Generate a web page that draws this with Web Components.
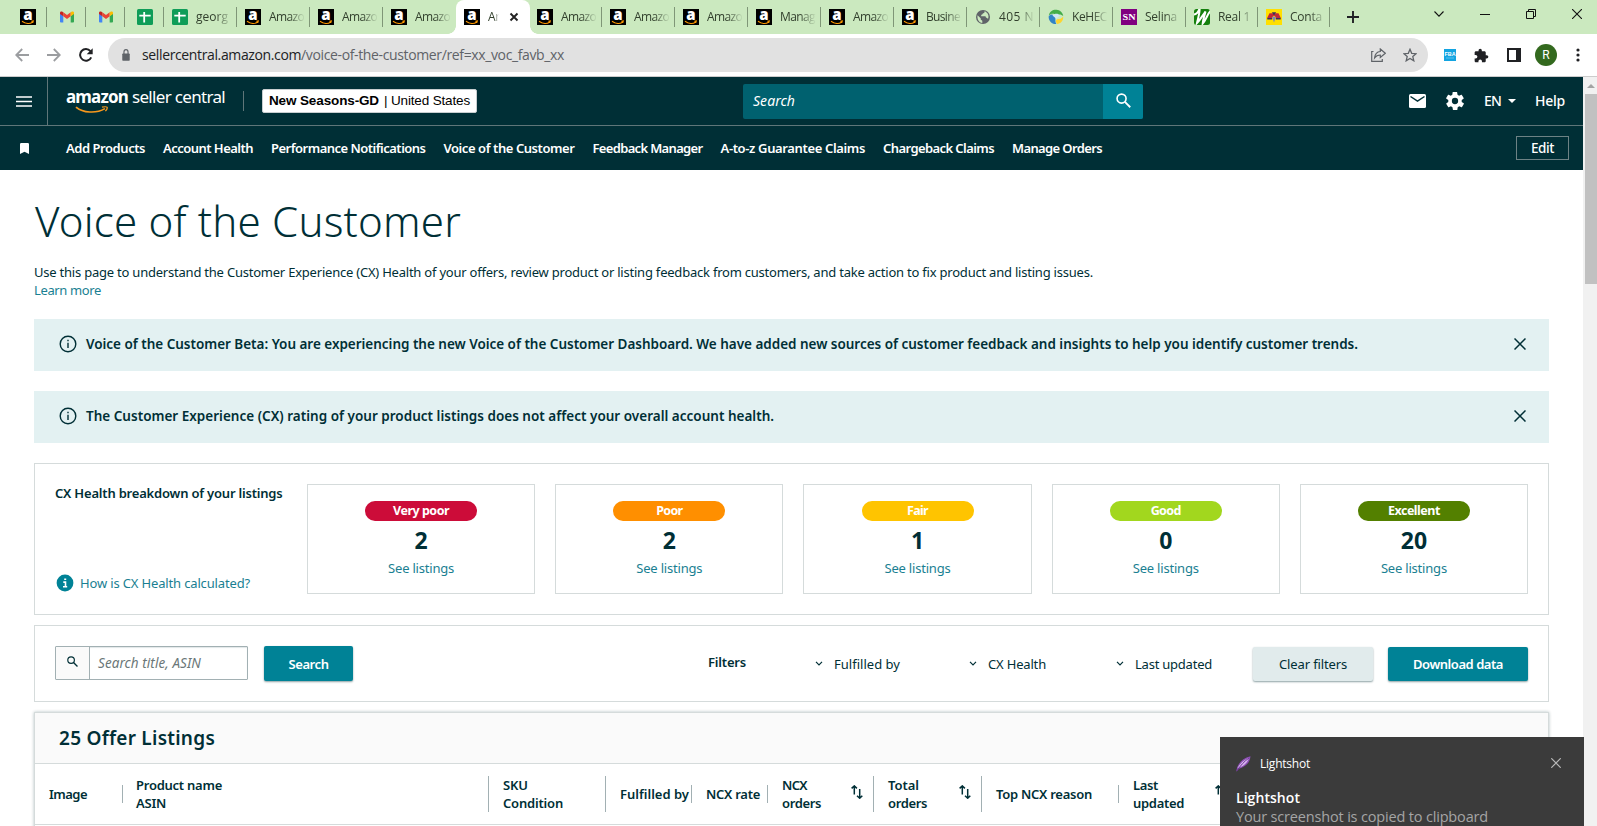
<!DOCTYPE html>
<html lang="en">
<head>
<meta charset="utf-8">
<title>Voice of the Customer</title>
<style>
  html, body {
    margin: 0;
    height: 826px;
    overflow: hidden;
    background: #fff;
  }
  body {
    font-family: "Noto Sans", "Open Sans", sans-serif;
    font-size: 13px;
    line-height: 18px;
    color: #002f36;
  }
</style>
</head>
<body>
<voc-app></voc-app>

<script>
const ICONS = {
  amazon: ['0 0 16 16', `<rect width="16" height="16" fill="#000"/>
    <text x="7.900" y="10.800" text-anchor="middle" font-family="Open Sans, sans-serif" font-weight="800" font-size="15" fill="#fff">a</text>
    <path d="M2 12.300c3.600 2.600 8 2.600 10.500.9M11.300 12.300l2-.3-.6 1.800" fill="none" stroke="#f90" stroke-width="1.100"/>`],
  gmail: ['0 0 16 16', `<path d="M1 4.200v8.300c0 .600.300.900.900.900h2.400V6.900z" fill="#4285f4"/>
    <path d="M15 4.200v8.300c0 .600-.300.900-.900.900h-2.400V6.900z" fill="#34a853"/>
    <path d="M4.300 3.300L8 6.100l3.700-2.800v4L8 10.100 4.300 7.300z" fill="#ea4335"/>
    <path d="M1 4c0-1.500 1.600-1.800 2.500-1.200l.8.600v3.900L1 4.900z" fill="#c5221f"/>
    <path d="M15 4c0-1.500-1.600-1.800-2.500-1.200l-.8.600v3.900L15 4.900z" fill="#fbbc04"/>`],
  sheet: ['0 0 16 16', `<rect width="16" height="16" rx="1.500" fill="#0f9d58"/><path d="M2.300 6.600h11.400M7.200 3v10.500" stroke="#fff" stroke-width="1.800"/>`],
  globe: ['0 0 16 16', `<circle cx="8" cy="8" r="7" fill="#5f6368"/><path d="M2.500 6.200l3.200 3v1.300l1.600 1.200v2.200C4 13.400 2 10.400 2.500 6.200zM9.500 2.200c.2 1.400-.4 2-1.600 2.100-.3 1.300-1 1.500-1.700 1.500v1.400h4.300c.3 1 .5 1.600 1.600 1.700.6.200.7.700.7 1.400 1.700-2.800.4-6.900-3.300-8.100z" fill="#cbe9bf"/>`],
  kehe: ['0 0 16 16', `<path d="M.8 6.500C1.500 2.500 5 .5 8.500.8c3.500.2 6.500 3 6.700 6.300-1.800-1.700-4.400-2.100-6.400-.600C6 4 3 4.500.8 6.500z" fill="#43ad49"/>
    <path d="M.7 7.200c2-2.400 4.900-2 6.300.600 1 2.600-.4 5 1.400 7.200C4 15.500.2 11.700.7 7.200z" fill="#3184c6"/>
    <path d="M15.200 7.500c.3 4.300-2.700 7.300-6 7.500-2-2.400-1.300-4.200 0-4.800 2.300-.1 4.800-.5 6-2.700z" fill="#fdd430"/>
    <path d="M4.500 6.500c2-2.300 5.800-2.300 7.400-.2L8.300 9.800z" fill="#cde6f2"/>`],
  sn: ['0 0 16 16', `<rect width="16" height="16" fill="#800080"/><text x="8" y="11.300" text-anchor="middle" textLength="13" lengthAdjust="spacingAndGlyphs" font-family="Liberation Serif, serif" font-weight="bold" font-size="9" fill="#fff">SN</text>`],
  real: ['0 0 16 16', `<rect width="16" height="16" rx="2.500" fill="#15800d"/><path d="M-.5 5.500C2.500 5.500 4.500 2.500 5.600-.5 6 4 4 9 3 14 6.500 10.500 8.800 6 11.500 2.500 10.500 7 9 10 8.700 14.500 12 11 13.500 5 16.500 2" fill="none" stroke="#fff" stroke-width="2"/>`],
  contact: ['0 0 16 16', `<rect width="16" height="16" fill="#ffdf00"/><path d="M3.500 4.200h9L15 9.300h-4.500L8 6.500 5.500 9.300H1z" fill="#c0283a"/><path d="M5.800 3.300h4.400L8 6.300z" fill="#34315d"/><path d="M1.300 9h4.900v1.500H1.300zm8.500 0h4.900v1.500H9.800z" fill="#34315d"/><path d="M6 7.800h4L8 13.500z" fill="#7b86b8"/>`],
  tabclose: ['0 0 10 10', `<path d="M1.500 1.500l7 7m0-7l-7 7" stroke="#222" stroke-width="1.900"/>`],
  plus: ['0 0 12 12', `<path d="M6 0v12M0 6h12" stroke="#202124" stroke-width="1.900"/>`],
  wchev: ['0 0 10 6', `<path d="M.5.500L5 5.200 9.500.500" fill="none" stroke="#111" stroke-width="1.100"/>`],
  wmin: ['0 0 10 10', `<path d="M0 4.500h10" stroke="#111"/>`],
  wmax: ['0 0 10 10', `<path d="M.5 2.500h7v7h-7zM2.500 2.500v-2h7v7h-2" fill="none" stroke="#111"/>`],
  wclose: ['0 0 10 10', `<path d="M0 0l10 10M10 0L0 10" stroke="#111" stroke-width="1.100"/>`],
  back: ['0 0 14 14', `<path d="M14 7H1.500M7.200 1L1.200 7l6 6" fill="none" stroke="#9b9da0" stroke-width="1.800"/>`],
  forward: ['0 0 14 14', `<path d="M0 7h12.500M6.800 1l6 6-6 6" fill="none" stroke="#9b9da0" stroke-width="1.800"/>`],
  reload: ['0 0 14 14', `<path d="M12.200 9.300A5.800 5.800 0 1 1 11.400 3.200" fill="none" stroke="#202124" stroke-width="2"/><path d="M13.700.300v6H7.700z" fill="#202124"/>`],
  lock: ['0 0 9 12', `<rect x=".300" y="4.500" width="8.400" height="7.300" rx=".8" fill="#5f6368"/><path d="M2.200 5V3a2.300 2.300 0 0 1 4.600 0v2" fill="none" stroke="#5f6368" stroke-width="1.300"/>`],
  share: ['0 0 15 14', `<path d="M2.500 3.500H.7v9.800h10.600v-2.300M9.300 1l5 4.300-5 4.200V7C6.500 7 5 7.800 3.600 9.800 4 6 6 3.800 9.300 3.500z" fill="none" stroke="#5f6368" stroke-width="1.200"/>`],
  star: ['0 0 14 14', `<path d="M7 1.300l1.700 4 4.400.4-3.300 2.900 1 4.200L7 10.500l-3.800 2.300 1-4.200L.9 5.700l4.400-.4z" fill="none" stroke="#5f6368" stroke-width="1.300"/>`],
  fba: ['0 0 12 12', `<rect width="12" height="12" fill="#13a4e1"/><text x="6" y="7.200" text-anchor="middle" textLength="11" lengthAdjust="spacingAndGlyphs" font-family="Liberation Sans, sans-serif" font-weight="bold" font-size="6" fill="#fff">FBA</text><path d="M2 9h8" stroke="#6fc8ee" stroke-width=".800"/>`],
  puzzle: ['1 0 23 23', `<path fill="#202124" d="M20.500 11H19V7c0-1.100-.9-2-2-2h-4V3.500a2.500 2.500 0 0 0-5 0V5H4c-1.100 0-2 .9-2 2v3.800h1.500a2.700 2.700 0 0 1 0 5.400H2V20c0 1.100.9 2 2 2h3.800v-1.500a2.700 2.700 0 0 1 5.400 0V22H17c1.100 0 2-.9 2-2v-4h1.500a2.500 2.500 0 0 0 0-5z"/>`],
  panel: ['0 0 14 14', `<path d="M1 1h12v12H1z" fill="none" stroke="#202124" stroke-width="2"/><path d="M9 0h5v14H9z" fill="#202124"/>`],
  dots: ['0 0 4 14', `<g fill="#202124"><circle cx="2" cy="2" r="1.600"/><circle cx="2" cy="7" r="1.600"/><circle cx="2" cy="12" r="1.600"/></g>`],
  menu: ['0 0 16 11', `<path d="M0 1h16M0 5.500h16M0 10h16" stroke="#fff" stroke-width="1.700"/>`],
  smile: ['0 0 34 9', `<path d="M1 1.200C8 7.800 21 8.800 30 3" fill="none" stroke="#f7981d" stroke-width="1.800"/><path d="M27 1.300c2-.5 4.200-.8 5 0 .6 1-.4 3-1.600 4.500" fill="none" stroke="#f7981d" stroke-width="1.300"/>`],
  search: ['0 0 14 14', `<circle cx="5.200" cy="5.200" r="4.200" fill="none" stroke="currentColor" stroke-width="1.500"/><path d="M8.300 8.300l5 5" stroke="currentColor" stroke-width="1.700"/>`],
  mail: ['0 0 17 14', `<rect width="17" height="14" rx="1.500" fill="#fff"/><path d="M1.500 2.500l7 4.700 7-4.700" fill="none" stroke="#002f36" stroke-width="1.500"/>`],
  gear: ['2 2 20 20', `<path fill="#fff" d="M19.400 13c0-.3.100-.6.100-1s0-.700-.1-1l2.100-1.600c.2-.2.200-.4.100-.6l-2-3.500c-.1-.2-.4-.3-.6-.2l-2.500 1c-.5-.4-1.100-.7-1.700-1l-.4-2.600c0-.3-.2-.5-.5-.5h-4c-.2 0-.4.200-.5.400l-.4 2.700c-.6.200-1.100.6-1.700 1l-2.500-1c-.2-.1-.4 0-.6.200l-2 3.500c-.1.200 0 .4.200.6L4.600 11c0 .3-.1.700-.1 1s0 .7.1 1l-2.100 1.600c-.2.200-.2.400-.1.600l2 3.500c.1.200.3.300.6.200l2.500-1c.5.400 1.100.7 1.700 1l.4 2.600c0 .3.200.5.500.5h4c.2 0 .5-.2.500-.4l.4-2.700c.6-.2 1.200-.6 1.700-1l2.500 1c.2.100.5 0 .6-.2l2-3.500c.1-.2.1-.5-.1-.6zM12 15.500a3.500 3.500 0 1 1 0-7 3.500 3.500 0 0 1 0 7z"/>`],
  caret: ['0 0 8 4', `<path d="M0 0h8L4 4z" fill="#fff"/>`],
  bookmark: ['0 0 9 11', `<path d="M0 1.200Q0 0 1.200 0h6.600Q9 0 9 1.200V11L4.500 8.800 0 11z" fill="#fff"/>`],
  info: ['0 0 18 18', `<circle cx="9" cy="9" r="7.800" fill="none" stroke="#002f36" stroke-width="1.400"/><path d="M9 7.800v5.200M9 4.800v1.500" stroke="#002f36" stroke-width="1.400"/>`],
  infofill: ['0 0 18 18', `<circle cx="9" cy="9" r="8.400" fill="#008296"/><path d="M7.300 8.100h2.200v4.500M7 12.800h4.200M8.200 5.200h2" fill="none" stroke="#fff" stroke-width="1.600"/>`],
  close: ['0 0 12 12', `<path d="M.5.500l11 11M11.500.500l-11 11" stroke="#002f36" stroke-width="1.500"/>`],
  chev: ['0 0 8 5', `<path d="M1 .8L4 3.800 7 .8" fill="none" stroke="#002f36" stroke-width="1.200"/>`],
  sort: ['0 0 12 14', `<path d="M3.300 9.500V1M.6 3.400L3.300.900l2.600 2.500M8.700 4v9M6 10.700l2.700 2.500 2.600-2.500" fill="none" stroke="#002f36" stroke-width="1.500"/>`],
  feather: ['0 0 15 16', `<path d="M.3 15.700C1 9 5 2.500 14.500.300 14 5.500 11.500 10 2.500 13z" fill="#8d4fb5"/><path d="M1.500 12C4 7.500 8 4 13 1.800 11.500 6.500 8 9.800 3.500 11.500" fill="#d9b8ee"/><path d="M1 14.800C4.500 9.500 8 5.500 13 2" stroke="#6d3596" stroke-width="1" fill="none"/>`],
  toastclose: ['0 0 10 10', `<path d="M.3.300l9.400 9.400M9.700.300L.3 9.700" stroke="#b9b9b9" stroke-width="1.200"/>`]
};

class UiIcon extends HTMLElement {
  connectedCallback() {
    const [box, body] = ICONS[this.getAttribute('name')];
    const w = this.getAttribute('w') || 16;
    const h = this.getAttribute('h') || w;
    this.attachShadow({ mode: 'open' }).innerHTML = `
      <style>
        :host { display: block; flex: none; width: ${w}px; height: ${h}px; }
        svg { display: block; }
      </style>
      <svg width="${w}" height="${h}" viewBox="${box}" preserveAspectRatio="none">${body}</svg>`;
  }
}
customElements.define('ui-icon', UiIcon);

// One line of text tracked out (or in) to the measure given in "w".
class UiText extends HTMLElement {
  connectedCallback() {
    this.attachShadow({ mode: 'open' }).innerHTML = `
      <style>
        :host { display: block; flex: none; white-space: nowrap; }
        span { display: inline-block; }
      </style>
      <span><slot></slot></span>`;
    const w = parseFloat(this.getAttribute('w'));
    if (!w) return;
    const span = this.shadowRoot.querySelector('span');
    const gap = (w - span.getBoundingClientRect().width) / this.textContent.length;
    span.style.letterSpacing = gap.toFixed(3) + 'px';
    this.style.width = w + 'px';
  }
}
customElements.define('ui-text', UiText);

class BrowserTab extends HTMLElement {
  connectedCallback() {
    const label = this.getAttribute('label');
    const active = this.hasAttribute('active');
    this.attachShadow({ mode: 'open' }).innerHTML = `
      <style>
        :host {
          display: flex; flex: none; box-sizing: border-box; position: relative;
          width: ${this.getAttribute('w') || 73}px; height: 34px; padding: 9px 0 0 8px;
          color: #32402d; font: 12px/16px "Open Sans", sans-serif;
        }
        :host(.bare) { padding-left: 12px; }
        :host::after { content: ''; position: absolute; right: 0; top: 7px; width: 1px; height: 20px; background: #7f9677; }
        :host([nosep])::after { display: none; }
        :host([active]) { background: #fff; border-radius: 8px 8px 0 0; width: 74px; margin-right: -1px; z-index: 1; }
        :host([active])::after, :host([active])::before {
          content: ''; position: absolute; display: block; width: 8px; height: 8px; top: 26px; bottom: auto;
          background: radial-gradient(circle at 0 0, transparent 7.500px, #fff 8px);
        }
        :host([active])::before { left: -8px; }
        :host([active])::after { right: -8px; background: radial-gradient(circle at 100% 0, transparent 7.500px, #fff 8px); }
        .label {
          width: ${active ? 11 : 36}px; margin-left: 8px; height: 18px; white-space: nowrap;
          -webkit-mask-image: linear-gradient(90deg, #000 55%, transparent);
          mask-image: linear-gradient(90deg, #000 55%, transparent);
        }
        .x { margin: 3px 0 0 10px; }
      </style>
      <ui-icon name="${this.getAttribute('icon')}" w="16"></ui-icon>
      ${label ? `<div class="label"><ui-text w="${this.getAttribute('tw') || 35}">${label}</ui-text></div>` : ''}
      ${active ? '<ui-icon class="x" name="tabclose" w="10"></ui-icon>' : ''}`;
  }
}
customElements.define('browser-tab', BrowserTab);

class BrowserBar extends HTMLElement {
  connectedCallback() {
    this.attachShadow({ mode: 'open' }).innerHTML = `
      <style>
        :host { display: block; height: 77px; }
        .strip { display: flex; height: 34px; background: #cbe9bf; padding-left: 8px; }
        .plus { margin: 11px 0 0 17px; }
        .win { display: flex; align-items: flex-start; margin-left: auto; padding: 9px 15px 0 0; gap: 36px; }
        .tools {
          display: flex; align-items: center; box-sizing: border-box;
          padding-left: 15px; border-bottom: 1px solid #ccc; height: 43px;
        }
        .omni {
          display: flex; align-items: center; box-sizing: border-box; margin-left: 15px;
          width: 1320px; height: 34px; border-radius: 17px; background: #e1e1e1;
          padding: 0 11px 0 14px; font: 14px/20px "Open Sans", sans-serif; color: #202124;
        }
        .omni i { font-style: normal; color: #5f6368; }
        .avatar {
          width: 22px; height: 22px; border-radius: 50%; background: #33691e; color: #fff; margin-left: 14px;
          font: 12px/22px Roboto, sans-serif; text-align: center;
        }
      </style>
      <div class="strip">
        <browser-tab class="bare" w="39" icon="amazon"></browser-tab>
        <browser-tab class="bare" w="39" icon="gmail"></browser-tab>
        <browser-tab class="bare" w="39" icon="gmail"></browser-tab>
        <browser-tab class="bare" w="39" icon="sheet"></browser-tab>
        <browser-tab icon="sheet" label="georg" tw="32"></browser-tab>
        <browser-tab icon="amazon" label="Amazo"></browser-tab>
        <browser-tab icon="amazon" label="Amazo"></browser-tab>
        <browser-tab icon="amazon" label="Amazo" nosep></browser-tab>
        <browser-tab icon="amazon" label="Ar" tw="12" active></browser-tab>
        <browser-tab icon="amazon" label="Amazo"></browser-tab>
        <browser-tab icon="amazon" label="Amazo"></browser-tab>
        <browser-tab icon="amazon" label="Amazo"></browser-tab>
        <browser-tab icon="amazon" label="Manag"></browser-tab>
        <browser-tab icon="amazon" label="Amazo"></browser-tab>
        <browser-tab icon="amazon" label="Busine" tw="34"></browser-tab>
        <browser-tab icon="globe" label="405 N"></browser-tab>
        <browser-tab icon="kehe" label="KeHEC"></browser-tab>
        <browser-tab icon="sn" label="Selina" tw="32"></browser-tab>
        <browser-tab w="72" icon="real" label="Real 1" tw="32"></browser-tab>
        <browser-tab w="72" icon="contact" label="Conta" tw="32"></browser-tab>
        <ui-icon class="plus" name="plus" w="12"></ui-icon>
        <div class="win">
          <ui-icon name="wchev" w="10" h="6" style="margin-top:2px"></ui-icon>
          <ui-icon name="wmin" w="10" style="margin-top:1px"></ui-icon>
          <ui-icon name="wmax" w="10"></ui-icon>
          <ui-icon name="wclose" w="10"></ui-icon>
        </div>
      </div>
      <div class="tools">
        <ui-icon name="back" w="14"></ui-icon>
        <ui-icon name="forward" w="14" style="margin-left:18px"></ui-icon>
        <ui-icon name="reload" w="14" style="margin-left:18px"></ui-icon>
        <div class="omni">
          <ui-icon name="lock" w="8" h="12"></ui-icon>
          <ui-text w="422" style="margin:0 auto 0 12px">sellercentral.amazon.com<i>/voice-of-the-customer/ref=xx_voc_favb_xx</i></ui-text>
          <ui-icon name="share" w="15" h="14"></ui-icon>
          <ui-icon name="star" w="14" style="margin-left:17px"></ui-icon>
        </div>
        <ui-icon name="fba" w="12" style="margin-left:16px"></ui-icon>
        <ui-icon name="puzzle" w="15" style="margin-left:18px"></ui-icon>
        <ui-icon name="panel" w="14" style="margin-left:18px"></ui-icon>
        <div class="avatar">R</div>
        <ui-icon name="dots" w="4" h="14" style="margin-left:19px"></ui-icon>
      </div>`;
  }
}
customElements.define('browser-bar', BrowserBar);

class SellerHeader extends HTMLElement {
  connectedCallback() {
    this.attachShadow({ mode: 'open' }).innerHTML = `
      <style>
        :host { display: block; height: 93px; background: #002f36; color: #fff; font-weight: 600; }
        .top { display: flex; align-items: center; height: 48px; border-bottom: 1px solid #5f7679; }
        .menu { width: 31px; padding-left: 16px; height: 48px; display: flex; align-items: center; border-right: 1px solid #5f7679; }
        .logo { margin-left: 18px; width: 159px; height: 36px; font-size: 17px; font-weight: 400; line-height: 22px; }
        .logo div { display: flex; gap: 4px; margin-top: 3px; }
        .logo b { font-weight: 700; }
        .logo ui-icon { margin: -2px 0 0 9px; }
        .sep { width: 1px; height: 20px; background: #5f7679; margin-left: 18px; }
        .account {
          display: flex; align-items: center; box-sizing: border-box; width: 215px; height: 24px; margin-left: 18px;
          padding-left: 6px; border: 1px solid #c8ced0; border-radius: 2px; background: #fff; color: #000;
          font: 13.500px/20px "Liberation Sans", sans-serif;
        }
        .find { display: flex; width: 400px; height: 35px; margin-left: 266px; background: #00616f; border-radius: 2px; overflow: hidden; }
        .find ui-text { font: italic 14px/34px "Noto Sans"; margin-left: 10px; }
        .find div { width: 40px; margin-left: auto; background: #008296; display: flex; align-items: center; justify-content: center; }
        .find div ui-icon { margin: -2px 0 0 0; }
        .right { display: flex; align-items: center; margin-left: auto; padding-right: 18px; font-size: 14px; font-weight: 500; }
        .nav { display: flex; align-items: center; height: 44px; gap: 18px; }
        .nav ui-icon { margin: 0 19px 0 20px; }
        .edit {
          display: flex; justify-content: center; margin-left: auto; margin-right: 14px; box-sizing: border-box;
          width: 53px; height: 24px; border: 1px solid #6d8285; line-height: 22px; font-size: 13.500px; font-weight: 500;
        }
      </style>
      <div class="top">
        <div class="menu"><ui-icon name="menu" w="16" h="11"></ui-icon></div>
        <div class="logo">
          <div><ui-text w="62"><b>amazon</b></ui-text><ui-text w="93">seller central</ui-text></div>
          <ui-icon name="smile" w="34" h="8"></ui-icon>
        </div>
        <div class="sep"></div>
        <div class="account"><ui-text w="110"><b>New Seasons-GD</b></ui-text><ui-text w="86" style="margin-left:5px">| United States</ui-text></div>
        <div class="find"><ui-text w="42">Search</ui-text><div><ui-icon name="search" w="15"></ui-icon></div></div>
        <div class="right">
          <ui-icon name="mail" w="17" h="14"></ui-icon>
          <ui-icon name="gear" w="18" style="margin-left:20px"></ui-icon>
          <ui-text w="17" style="margin-left:20px">EN</ui-text>
          <ui-icon name="caret" w="8" h="4" style="margin-left:7px"></ui-icon>
          <ui-text w="30" style="margin-left:19px">Help</ui-text>
        </div>
      </div>
      <div class="nav">
        <ui-icon name="bookmark" w="9" h="11"></ui-icon>
        <ui-text w="79">Add Products</ui-text>
        <ui-text w="90">Account Health</ui-text>
        <ui-text w="154.500">Performance Notifications</ui-text>
        <ui-text w="131">Voice of the Customer</ui-text>
        <ui-text w="110">Feedback Manager</ui-text>
        <ui-text w="144.500">A-to-z Guarantee Claims</ui-text>
        <ui-text w="111">Chargeback Claims</ui-text>
        <ui-text w="90">Manage Orders</ui-text>
        <div class="edit"><ui-text w="23">Edit</ui-text></div>
      </div>`;
  }
}
customElements.define('seller-header', SellerHeader);

class VocAlert extends HTMLElement {
  connectedCallback() {
    this.attachShadow({ mode: 'open' }).innerHTML = `
      <style>
        :host {
          display: flex; align-items: center; box-sizing: border-box; height: 52px; margin-bottom: 20px;
          padding: 0 23px 2px 25px; background: #e3f1f2; font-weight: 600; font-size: 13.500px;
        }
        div { margin: 0 auto 0 9px; }
      </style>
      <ui-icon name="info" w="18"></ui-icon>
      <div><slot></slot></div>
      <ui-icon name="close" w="12"></ui-icon>`;
  }
}
customElements.define('voc-alert', VocAlert);

class HealthCard extends HTMLElement {
  connectedCallback() {
    this.attachShadow({ mode: 'open' }).innerHTML = `
      <style>
        :host {
          display: flex; flex-direction: column; align-items: center; flex: 1; box-sizing: border-box;
          height: 110px; padding-top: 16px; border: 1px solid #d5dbdb;
        }
        .pill {
          display: flex; justify-content: center; width: 112px; height: 20px; border-radius: 10px;
          background: ${this.getAttribute('color')}; color: #fff; font: 700 12.500px/19px "Noto Sans";
        }
        .count { font-size: 23px; font-weight: 700; line-height: 30px; margin-top: 4px; }
        ui-text.link { color: #1a7f92; margin-top: 4px; }
      </style>
      <div class="pill"><ui-text w="${this.getAttribute('w')}">${this.getAttribute('label')}</ui-text></div>
      <div class="count">${this.getAttribute('count')}</div>
      <ui-text class="link" w="66">See listings</ui-text>`;
  }
}
customElements.define('health-card', HealthCard);

class VocPanel extends HTMLElement {
  connectedCallback() {
    this.attachShadow({ mode: 'open' }).innerHTML = `
      <style>
        :host { display: flex; box-sizing: border-box; border: 1px solid #d5dbdb; padding: 20px; margin-bottom: 10px; }
      </style>
      <slot></slot>`;
  }
}
customElements.define('voc-panel', VocPanel);

class VocButton extends HTMLElement {
  connectedCallback() {
    this.attachShadow({ mode: 'open' }).innerHTML = `
      <style>
        :host {
          display: flex; flex: none; align-items: center; justify-content: center; border-radius: 2px;
          background: #008296; color: #fff; font-weight: 600; font-size: 13px; box-shadow: 0 1px 2px rgba(0, 47, 54, .45);
        }
        :host([plain]) { background: #e1ebec; color: #002f36; font-weight: 400; }
      </style>
      <slot></slot>`;
  }
}
customElements.define('voc-button', VocButton);

class HealthPanel extends HTMLElement {
  connectedCallback() {
    this.attachShadow({ mode: 'open' }).innerHTML = `
      <style>
        :host { display: block; }
        voc-panel { height: 152px; }
        .side { flex: none; width: 252px; box-sizing: border-box; display: flex; flex-direction: column; justify-content: space-between; }
        .title { font-weight: 600; }
        .how { display: flex; align-items: center; gap: 6px; color: #1a7f92; margin-bottom: 2px; padding-left: 1px; }
        .cards { display: flex; flex: 1; gap: 20px; }
      </style>
      <voc-panel>
        <div class="side">
          <ui-text class="title" w="227.500">CX Health breakdown of your listings</ui-text>
          <div class="how"><ui-icon name="infofill" w="18"></ui-icon><ui-text w="170">How is CX Health calculated?</ui-text></div>
        </div>
        <div class="cards">
          <health-card label="Very poor" w="56" count="2" color="#cc0c39"></health-card>
          <health-card label="Poor" w="26" count="2" color="#ff8f00"></health-card>
          <health-card label="Fair" w="21" count="1" color="#ffc400"></health-card>
          <health-card label="Good" w="30" count="0" color="#a2d71e"></health-card>
          <health-card label="Excellent" w="52" count="20" color="#538000"></health-card>
        </div>
      </voc-panel>`;
  }
}
customElements.define('health-panel', HealthPanel);

class FilterPanel extends HTMLElement {
  connectedCallback() {
    this.attachShadow({ mode: 'open' }).innerHTML = `
      <style>
        :host { display: block; }
        voc-panel { height: 77px; }
        .box { display: flex; box-sizing: border-box; width: 193px; height: 34px; border: 1px solid #a2b0b3; border-radius: 1px; box-shadow: inset 0 1px 1px #e2e7e8; }
        .box div { width: 33px; background: #fafafa; border-right: 1px solid #a2b0b3; }
        .box div ui-icon { margin: 9px 0 0 11px; }
        .box ui-text { margin-left: 8px; font: italic 13.500px/32px "Noto Sans"; color: #6b7778; }
        .go { width: 89px; height: 35px; margin-left: 16px; }
        .filters { font-weight: 600; margin: 7px 0 0 355px; }
        .drop { display: flex; gap: 11px; margin-top: 9px; }
        .drop ui-icon { margin-top: 6px; }
        .clear { width: 120px; height: 34px; margin: 1px 0 0 auto; }
        .download { width: 140px; height: 34px; margin: 1px 0 0 15px; }
      </style>
      <voc-panel>
        <div class="box"><div><ui-icon name="search" w="11"></ui-icon></div><ui-text w="103">Search title, ASIN</ui-text></div>
        <voc-button class="go"><ui-text w="40">Search</ui-text></voc-button>
        <ui-text class="filters" w="38">Filters</ui-text>
        <div class="drop" style="margin-left:69px"><ui-icon name="chev" w="8" h="5"></ui-icon><ui-text w="66">Fulfilled by</ui-text></div>
        <div class="drop" style="margin-left:69px"><ui-icon name="chev" w="8" h="5"></ui-icon><ui-text w="58">CX Health</ui-text></div>
        <div class="drop" style="margin-left:70px"><ui-icon name="chev" w="8" h="5"></ui-icon><ui-text w="77">Last updated</ui-text></div>
        <voc-button class="clear" plain><ui-text w="68">Clear filters</ui-text></voc-button>
        <voc-button class="download"><ui-text w="90">Download data</ui-text></voc-button>
      </voc-panel>`;
  }
}
customElements.define('filter-panel', FilterPanel);

class ListingTable extends HTMLElement {
  constructor() {
    super();
    // cell width, separator height, then [text, width] per line
    this.columns = [
      { w: 88, sep: 18, lines: [['Image', 38]] },
      { w: 366, sep: 36, pad: 13, lines: [['Product name', 86], ['ASIN', 30]] },
      { w: 117, sep: 36, lines: [['SKU', 25], ['Condition', 60]] },
      { w: 86, sep: 18, lines: [['Fulfilled by', 69]] },
      { w: 76, sep: 18, lines: [['NCX rate', 54]] },
      { w: 106, sep: 36, sort: true, lines: [['NCX', 25], ['orders', 39]] },
      { w: 108, sep: 36, sort: true, lines: [['Total', 31], ['orders', 39]] },
      { w: 137, sep: 18, lines: [['Top NCX reason', 96]] },
      { w: 119, sep: 36, sort: true, lines: [['Last', 25], ['updated', 51]] }
    ];
  }
  connectedCallback() {
    const cells = this.columns.map((c) => `
      <div class="cell" style="width:${c.w}px;padding-left:${c.pad || 14}px">
        <div>${c.lines.map(([t, w]) => `<ui-text w="${w}">${t}</ui-text>`).join('')}</div>
        ${c.sort ? '<ui-icon name="sort" w="12" h="14"></ui-icon>' : ''}
        <i style="height:${c.sep}px"></i>
      </div>`).join('');
    this.attachShadow({ mode: 'open' }).innerHTML = `
      <style>
        :host { display: block; box-sizing: border-box; border: 1px solid #d5dbdb; height: 130px; box-shadow: 0 0 3px rgba(0, 47, 54, .3); }
        .title { height: 50px; background: #fafafa; border-bottom: 1px solid #d5dbdb; padding-left: 24px; font-size: 19px; font-weight: 600; line-height: 50px; }
        .head { display: flex; height: 60px; border-bottom: 1px solid #d5dbdb; font-weight: 600; align-items: center; }
        .cell { display: flex; flex: none; align-items: center; box-sizing: border-box; }
        .cell i { width: 1px; background: #a2b0b3; margin-left: auto; }
        .cell ui-icon { margin: -4px 10px 0 auto; }
        .cell ui-icon + i { margin-left: 0; }
      </style>
      <div class="title"><ui-text w="156">25 Offer Listings</ui-text></div>
      <div class="head">${cells}</div>`;
  }
}
customElements.define('listing-table', ListingTable);

class PageScrollbar extends HTMLElement {
  connectedCallback() {
    this.attachShadow({ mode: 'open' }).innerHTML = `
      <style>
        :host { display: block; flex: none; width: 14px; background: #f1f1f1; }
        .up { width: 0; margin: 0 0 6px 4px; border: 4px solid transparent; border-top: 0; border-bottom: 4px solid #a3a3a3; }
        .thumb { margin-left: 2px; height: 190px; background: #c1c1c1; }
        :host { box-sizing: border-box; padding-top: 7px; }
      </style>
      <div class="up"></div>
      <div class="thumb"></div>`;
  }
}
customElements.define('page-scrollbar', PageScrollbar);

class ToastMessage extends HTMLElement {
  connectedCallback() {
    this.attachShadow({ mode: 'open' }).innerHTML = `
      <style>
        :host {
          position: absolute; left: 1220px; top: 737px; width: 364px; height: 89px; overflow: hidden; box-sizing: border-box;
          background: #3b3b3b; color: #fff; padding: 19px 0 0 16px; font-family: "Open Sans", sans-serif;
        }
        .app { display: flex; height: 16px; align-items: center; font-size: 12px; gap: 9px; }
        .app .x { margin: -3px 23px 0 auto; }
        .title { font-size: 14px; font-weight: 600; line-height: 20px; margin-top: 16px; }
        .desc { font-size: 14.500px; line-height: 18px; color: #a5a5a5; }
      </style>
      <div class="app">
        <ui-icon name="feather" w="15" h="16"></ui-icon>
        <ui-text w="50">Lightshot</ui-text>
        <ui-icon class="x" name="toastclose" w="10"></ui-icon>
      </div>
      <ui-text class="title" w="64">Lightshot</ui-text>
      <ui-text class="desc" w="252">Your screenshot is copied to clipboard</ui-text>`;
  }
}
customElements.define('toast-message', ToastMessage);

class VocApp extends HTMLElement {
  connectedCallback() {
    this.attachShadow({ mode: 'open' }).innerHTML = `
      <style>
        :host { display: block; width: 1597px; height: 826px; overflow: hidden; position: relative; }
        .view { display: flex; height: 749px; }
        .page { width: 1583px; }
        main { padding: 0 34px; }
        h1 { margin: 0; padding: 24px 0 0 1px; font-size: 42px; font-weight: 300; line-height: 54px; }
        .intro { padding: 15px 0; }
        .intro .more { color: #1a7f92; }
      </style>
      <browser-bar></browser-bar>
      <div class="view">
        <div class="page">
          <seller-header></seller-header>
          <main>
            <h1><ui-text w="426">Voice of the Customer</ui-text></h1>
            <div class="intro">
              <ui-text w="1059">Use this page to understand the Customer Experience (CX) Health of your offers, review product or listing feedback from customers, and take action to fix product and listing issues.</ui-text>
              <ui-text class="more" w="67">Learn more</ui-text>
            </div>
            <voc-alert style="margin-top:5px"><ui-text w="1272">Voice of the Customer Beta: You are experiencing the new Voice of the Customer Dashboard. We have added new sources of customer feedback and insights to help you identify customer trends.</ui-text></voc-alert>
            <voc-alert><ui-text w="688">The Customer Experience (CX) rating of your product listings does not affect your overall account health.</ui-text></voc-alert>
            <health-panel></health-panel>
            <filter-panel></filter-panel>
            <listing-table></listing-table>
          </main>
        </div>
        <page-scrollbar></page-scrollbar>
      </div>
      <toast-message></toast-message>`;
  }
}
customElements.define('voc-app', VocApp);
</script>
</body>
</html>
